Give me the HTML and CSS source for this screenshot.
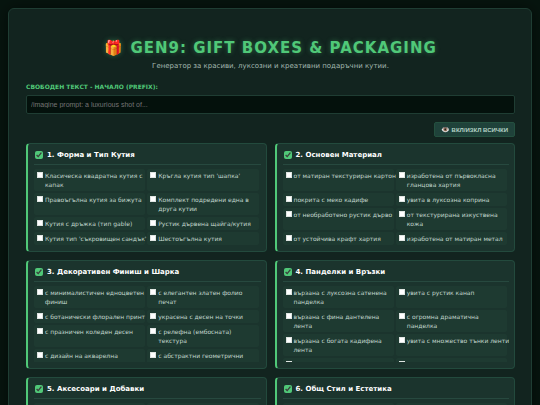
FILE: index.html
```
<!DOCTYPE html>
<html lang="bg">
<head>
    <meta charset="UTF-8">
    <meta name="viewport" content="width=device-width, initial-scale=1.0">
    <title>GEN9: Gift Boxes & Packaging</title>
    <link rel="stylesheet" href="styles.css">
</head>
<body>
    <div class="container">
        <header>
            <h1>🎁 GEN9: Gift Boxes &amp; Packaging</h1>
            <p class="subtitle">Генератор за красиви, луксозни и креативни подаръчни кутии.</p>
        </header>

        <label class="prefix-label" for="prefix">Свободен текст - Начало (Prefix):</label>
        <input type="text" class="prefix-input" id="prefix" placeholder="/imagine prompt: a luxurious shot of...">

        <div class="controls">
            <button type="button" class="toggle-btn" onclick="toggleAll()"><span class="eye">👁️</span> ВКЛ/ИЗКЛ ВСИЧКИ</button>
        </div>

        <div class="grid">
            <section class="card">
                <h2 class="card-title"><label><input type="checkbox" class="section-check" checked> 1. Форма и Тип Кутия</label></h2>
                <div class="options">
                    <label class="option"><input type="checkbox"><span>Класическа квадратна кутия с капак</span></label>
                    <label class="option"><input type="checkbox"><span>Кръгла кутия тип 'шапка'</span></label>
                    <label class="option"><input type="checkbox"><span>Правоъгълна кутия за бижута</span></label>
                    <label class="option"><input type="checkbox"><span>Комплект подредени една в друга кутии</span></label>
                    <label class="option"><input type="checkbox"><span>Кутия с дръжка (тип gable)</span></label>
                    <label class="option"><input type="checkbox"><span>Рустик дървена щайга/кутия</span></label>
                    <label class="option"><input type="checkbox"><span>Кутия тип 'съкровищен сандък'</span></label>
                    <label class="option"><input type="checkbox"><span>Шестоъгълна кутия</span></label>
                </div>
            </section>

            <section class="card">
                <h2 class="card-title"><label><input type="checkbox" class="section-check" checked> 2. Основен Материал</label></h2>
                <div class="options">
                    <label class="option"><input type="checkbox"><span>от матиран текстуриран картон</span></label>
                    <label class="option"><input type="checkbox"><span>изработена от първокласна гланцова хартия</span></label>
                    <label class="option"><input type="checkbox"><span>покрита с меко кадифе</span></label>
                    <label class="option"><input type="checkbox"><span>увита в луксозна коприна</span></label>
                    <label class="option"><input type="checkbox"><span>от необработено рустик дърво</span></label>
                    <label class="option"><input type="checkbox"><span>от текстурирана изкуствена кожа</span></label>
                    <label class="option"><input type="checkbox"><span>от устойчива крафт хартия</span></label>
                    <label class="option"><input type="checkbox"><span>изработена от матиран метал</span></label>
                </div>
            </section>

            <section class="card">
                <h2 class="card-title"><label><input type="checkbox" class="section-check" checked> 3. Декоративен Финиш и Шарка</label></h2>
                <div class="options">
                    <label class="option"><input type="checkbox"><span>с минималистичен едноцветен финиш</span></label>
                    <label class="option"><input type="checkbox"><span>с елегантен златен фолио печат</span></label>
                    <label class="option"><input type="checkbox"><span>с ботанически флорален принт</span></label>
                    <label class="option"><input type="checkbox"><span>украсена с десен на точки</span></label>
                    <label class="option"><input type="checkbox"><span>с празничен коледен десен</span></label>
                    <label class="option"><input type="checkbox"><span>с релефна (ембосната)<br>текстура</span></label>
                    <label class="option"><input type="checkbox"><span>с дизайн на акварелна<br>рисунка</span></label>
                    <label class="option"><input type="checkbox"><span>с абстрактни геометрични форми</span></label>
                </div>
            </section>

            <section class="card">
                <h2 class="card-title"><label><input type="checkbox" class="section-check" checked> 4. Панделки и Връзки</label></h2>
                <div class="options">
                    <label class="option"><input type="checkbox"><span>вързана с луксозна сатенена панделка</span></label>
                    <label class="option"><input type="checkbox"><span>увита с рустик канап</span></label>
                    <label class="option"><input type="checkbox"><span>вързана с фина дантелена лента</span></label>
                    <label class="option"><input type="checkbox"><span>с огромна драматична панделка</span></label>
                    <label class="option"><input type="checkbox"><span>вързана с богата кадифена лента</span></label>
                    <label class="option"><input type="checkbox"><span>увита с множество тънки ленти</span></label>
                    <label class="option"><input type="checkbox"><span>с кожена каишка</span></label>
                    <label class="option"><input type="checkbox"><span>без панделка</span></label>
                </div>
            </section>

            <section class="card">
                <h2 class="card-title"><label><input type="checkbox" class="section-check" checked> 5. Аксесоари и Добавки</label></h2>
                <div class="options">
                    <label class="option"><input type="checkbox"><span>с восъчен печат</span></label>
                    <label class="option"><input type="checkbox"><span>със сушени цветя</span></label>
                </div>
            </section>

            <section class="card">
                <h2 class="card-title"><label><input type="checkbox" class="section-check" checked> 6. Общ Стил и Естетика</label></h2>
                <div class="options">
                    <label class="option"><input type="checkbox"><span>луксозен стил</span></label>
                    <label class="option"><input type="checkbox"><span>минималистичен стил</span></label>
                </div>
            </section>
        </div>
    </div>

    <script>
        function toggleAll() {
            const checks = document.querySelectorAll('.section-check');
            const allOn = Array.from(checks).every(c => c.checked);
            checks.forEach(c => c.checked = !allOn);
        }
    </script>
</body>
</html>
```
FILE: styles.css
```
* {
    box-sizing: border-box;
}

body {
    font-family: "DejaVu Sans", sans-serif;
    background-color: #07150f;
    color: #c3d8ce;
    margin: 0;
    padding: 8px;
    font-size: 6px;
}

.container {
    background-color: #12241f;
    border: 1px solid #1f3d33;
    border-radius: 6px;
    box-shadow: 0 0 16px rgba(0, 0, 0, 0.5);
    padding: 29px 16px 16px 17px;
}

header {
    text-align: center;
    margin-bottom: 12px;
}

h1 {
    margin: 0;
    font-size: 15px;
    line-height: 20px;
    letter-spacing: 1px;
    text-transform: uppercase;
    color: #50c878;
    text-shadow: 0 0 5px rgba(80, 200, 120, 0.4);
}

.subtitle {
    margin: 4px 0 0;
    font-size: 7px;
    line-height: 9px;
    color: #a3b8af;
}

.prefix-label {
    display: block;
    font-size: 6px;
    line-height: 8px;
    font-weight: bold;
    text-transform: uppercase;
    color: #50c878;
    margin-bottom: 4px;
}

.prefix-input {
    display: block;
    width: 100%;
    height: 19px;
    padding: 0 4px;
    background-color: #04110c;
    border: 1px solid #1f3d33;
    border-radius: 2px;
    color: #d5e8df;
    font-family: "Liberation Sans", sans-serif;
    font-size: 7px;
}

.prefix-input::placeholder {
    color: #757575;
}

.controls {
    display: flex;
    justify-content: flex-end;
    margin: 8px 0 6px;
}

.toggle-btn {
    display: flex;
    align-items: center;
    gap: 2px;
    height: 15px;
    padding: 0 6px;
    background-color: #1f423a;
    border: 1px solid #24503f;
    border-radius: 2px;
    color: #b4d2c6;
    font-family: "Liberation Sans", sans-serif;
    font-size: 6px;
    font-weight: bold;
    cursor: pointer;
}

.eye {
    font-size: 7px;
}

.grid {
    display: grid;
    grid-template-columns: 1fr 1fr;
    gap: 8px;
}

.card {
    background-color: #1b342d;
    border: 1px solid #234a3d;
    border-left: 2px solid #50c878;
    border-radius: 4px;
    padding: 7px 5px 6px 6px;
    min-width: 0;
}

.card-title {
    margin: 0 0 4px;
    padding-bottom: 5px;
    border-bottom: 1px solid #27493f;
    font-size: 7px;
    line-height: 8px;
    color: #ffffff;
}

.card-title label {
    display: flex;
    align-items: center;
    gap: 4px;
    padding-left: 1px;
}

.section-check {
    width: 8px;
    height: 8px;
    margin: 0;
    accent-color: #50c878;
}

.options {
    display: grid;
    grid-template-columns: 1fr 1fr;
    align-content: start;
    gap: 2px;
    height: 76px;
    padding-right: 2px;
    overflow-x: hidden;
    overflow-y: auto;
    scrollbar-width: none;
}

.option {
    display: flex;
    align-items: flex-start;
    gap: 2px;
    padding: 2px 0 2px 3px;
    background-color: #1e3a31;
    border-radius: 2px;
    font-size: 6px;
    line-height: 9px;
    cursor: pointer;
}

/* long names may run into the column gap before they wrap */
.option span {
    margin-right: -4px;
}

.option input {
    appearance: none;
    flex: none;
    width: 6px;
    height: 6px;
    margin: 1px 0 0;
    background-color: #ffffff;
    border: 1px solid #dfe5e2;
}

.option input:checked {
    background-color: #50c878;
}
```
